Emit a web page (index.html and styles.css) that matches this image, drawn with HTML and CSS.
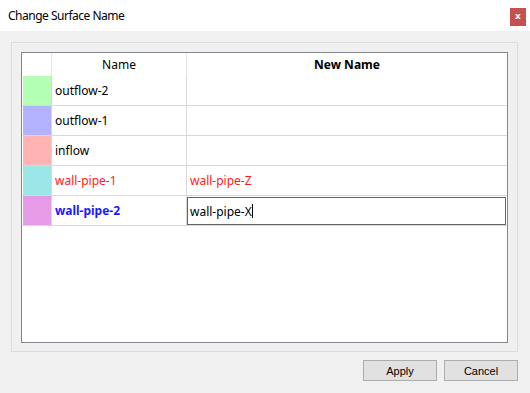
FILE: index.html
```html
<!DOCTYPE html>
<html lang="en">
<head>
    <meta charset="UTF-8">
    <title>Change Surface Name</title>
    <link rel="stylesheet" href="styles.css">
</head>
<body>
    <div class="window">
        <div class="titlebar">
            <span class="title">Change Surface Name</span>
            <span class="close">x</span>
        </div>
        <div class="content">
            <div class="frame">
                <div class="table">
                    <div class="row head">
                        <div class="cell swatch-cell"></div>
                        <div class="cell name">Name</div>
                        <div class="cell new bold">New Name</div>
                    </div>
                    <div class="row">
                        <div class="cell swatch-cell"><div class="swatch green"></div></div>
                        <div class="cell name">outflow-2</div>
                        <div class="cell new"></div>
                    </div>
                    <div class="row">
                        <div class="cell swatch-cell"><div class="swatch blue"></div></div>
                        <div class="cell name">outflow-1</div>
                        <div class="cell new"></div>
                    </div>
                    <div class="row">
                        <div class="cell swatch-cell"><div class="swatch pink"></div></div>
                        <div class="cell name">inflow</div>
                        <div class="cell new"></div>
                    </div>
                    <div class="row changed">
                        <div class="cell swatch-cell"><div class="swatch cyan"></div></div>
                        <div class="cell name">wall-pipe-1</div>
                        <div class="cell new">wall-pipe-Z</div>
                    </div>
                    <div class="row current">
                        <div class="cell swatch-cell"><div class="swatch violet"></div></div>
                        <div class="cell name">wall-pipe-2</div>
                        <div class="cell new">
                            <div class="edit">wall-pipe-X<span class="caret"></span></div>
                        </div>
                    </div>
                </div>
            </div>
            <div class="buttons">
                <button class="btn">Apply</button>
                <button class="btn">Cancel</button>
            </div>
        </div>
    </div>
</body>
</html>
```

FILE: styles.css
```css
body {
    margin: 0;
    background-color: #f0f0f0;
    font-family: 'Noto Sans', sans-serif;
    font-size: 12px;
    color: #000;
}
.window {
    width: 530px;
    height: 393px;
    overflow: hidden;
}
.titlebar {
    height: 31px;
    background-color: #fff;
    display: flex;
    justify-content: space-between;
    align-items: center;
    padding-left: 8px;
    padding-right: 4px;
}
.title {
    font-size: 12px;
    letter-spacing: -0.5px;
    color: #000;
}
.close {
    align-self: flex-start;
    margin-top: 8px;
    width: 16px;
    height: 18px;
    background-color: #c75050;
    color: #fff;
    font-family: 'DejaVu Sans', sans-serif;
    font-weight: bold;
    font-size: 9px;
    line-height: 17px;
    text-align: center;
}
.content {
    padding: 11px 12px 0 11px;
}
.frame {
    border: 1px solid #dcdcdc;
    padding: 9px 9px 8px 9px;
}
.table {
    border: 1px solid #828790;
    background-color: #fff;
    height: 289px;
}
.row {
    display: grid;
    grid-template-columns: 30px 135px 1fr;
    height: 29px;
    border-bottom: 1px solid #d8d8d8;
}
.row.head {
    height: 23px;
    border-bottom: none;
}
.cell {
    display: flex;
    align-items: center;
    border-right: 1px solid #d8d8d8;
    padding-left: 3px;
    white-space: nowrap;
}
.cell.new {
    border-right: none;
}
.head .cell {
    justify-content: center;
    padding-left: 0;
    border-right-color: #e5e5e5;
}
.head .cell.new {
    border-right: none;
}
.bold {
    font-weight: bold;
}
.swatch-cell {
    padding-left: 1px;
    align-items: stretch;
}
.swatch {
    width: 28px;
}
.green { background-color: #b3ffb3; }
.blue { background-color: #b3b3ff; }
.pink { background-color: #ffb3b3; }
.cyan { background-color: #9be6e6; }
.violet { background-color: #e69be6; }
.changed .name, .changed .new {
    color: #ff1a1a;
}
.current .name {
    color: #1a1aff;
    font-weight: bold;
}
.current .cell.new {
    padding: 1px 1px 0 0;
    align-items: stretch;
}
.edit {
    flex: 1;
    border: 1px solid #646464;
    display: flex;
    align-items: center;
    padding-left: 2px;
}
.caret {
    display: inline-block;
    width: 1px;
    height: 14px;
    background-color: #000;
}
.buttons {
    display: flex;
    justify-content: flex-end;
    gap: 7px;
    margin-top: 8px;
}
.btn {
    width: 74px;
    height: 21px;
    background-color: #e1e1e1;
    border: 1px solid #adadad;
    font-family: 'Liberation Sans', sans-serif;
    font-size: 11px;
    color: #000;
    padding: 0;
    margin: 0;
}
```
